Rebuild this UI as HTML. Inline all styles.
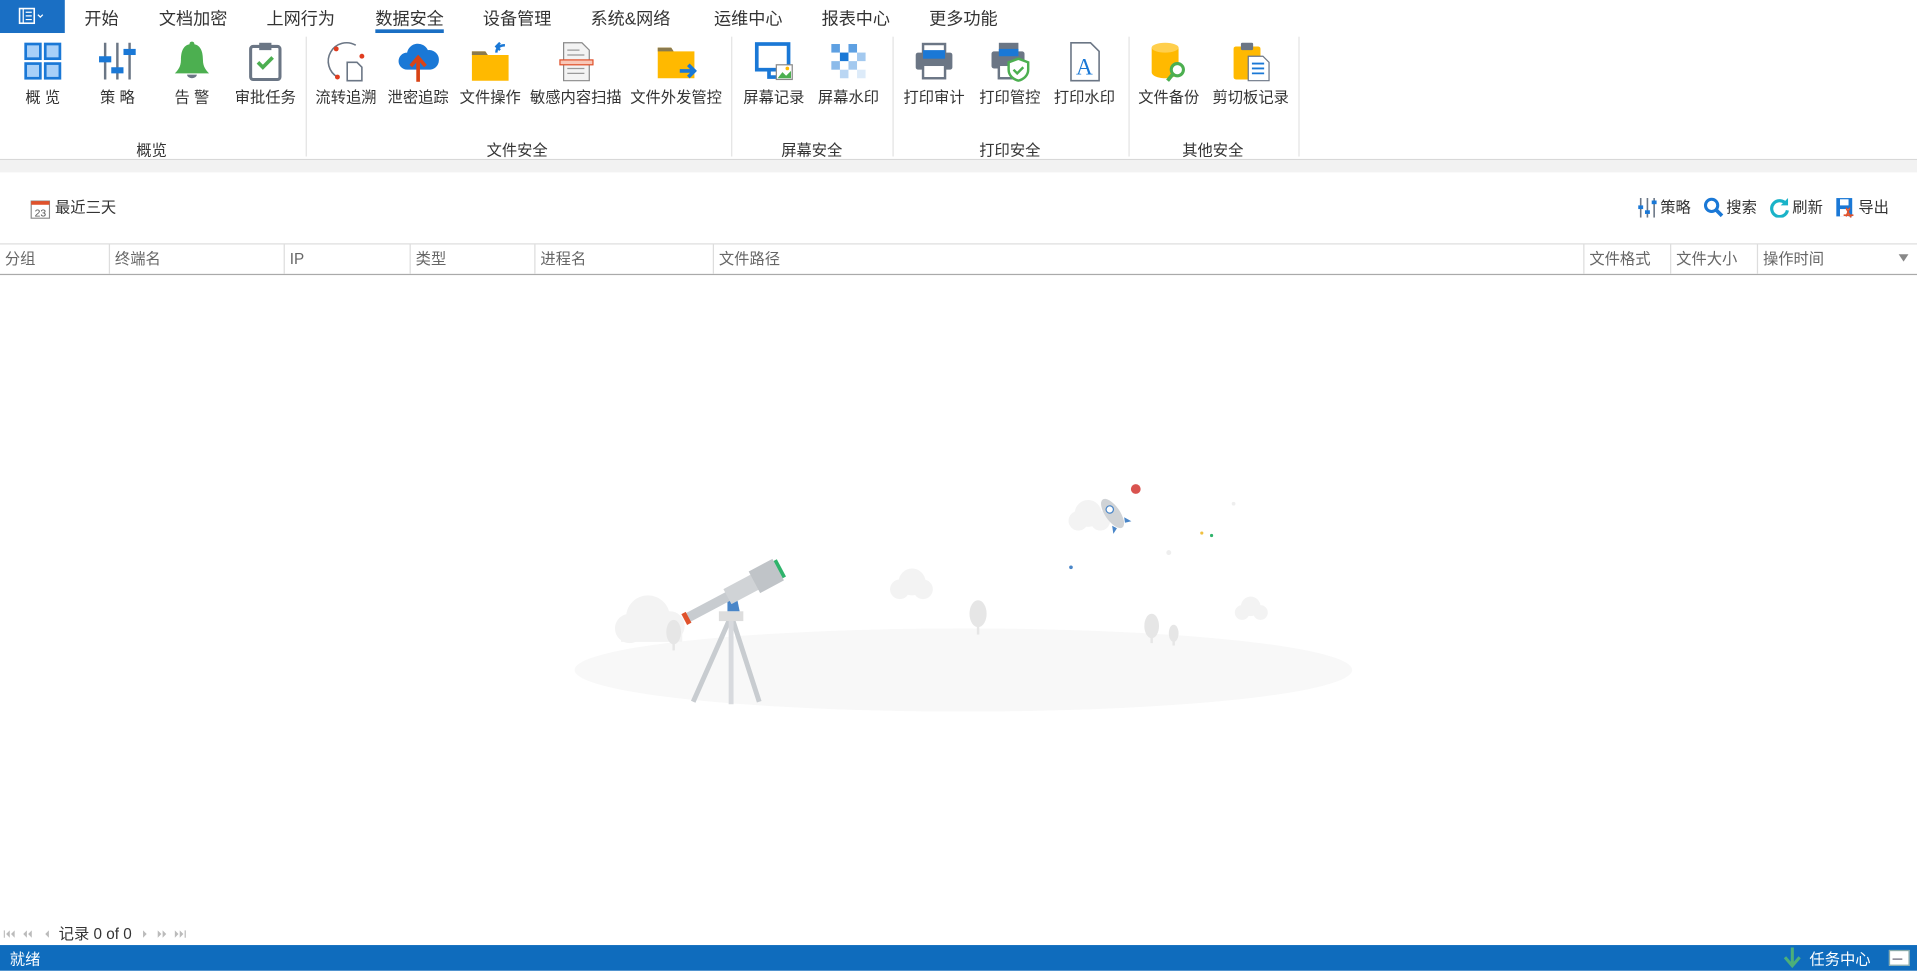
<!DOCTYPE html>
<html><head><meta charset="utf-8">
<style>
html,body{margin:0;padding:0;width:1917px;height:970px;overflow:hidden;background:#fff}
#w{position:absolute;left:0;top:0;width:1568px;height:794px;transform:scale(1.22258);transform-origin:0 0;font-family:"Liberation Sans","Noto Sans CJK SC",sans-serif;color:#333;line-height:1}
.a{position:absolute}
.tab{position:absolute;top:8px;font-size:14px;color:#333;white-space:nowrap}
.it{position:absolute;top:33px;width:80px;margin-left:-40px;text-align:center}
.it svg{display:block;margin:0 auto;width:34px;height:34px}
.it span{display:block;margin-top:7px;font-size:12.5px;white-space:nowrap;color:#333}
.gl{position:absolute;top:117px;font-size:12.5px;width:120px;margin-left:-60px;text-align:center}
.sep{position:absolute;top:30px;height:98px;width:1px;background:#e3e3e3}
.th{position:absolute;top:206px;font-size:12.5px;color:#666}
.cs{position:absolute;top:200px;height:24px;width:1px;background:#ddd}
</style></head><body><div id="w">
<div class="a" style="left:0;top:0;width:53px;height:27px;background:#1a6fc4"></div>
<svg class="a" style="left:15px;top:6px" width="24" height="14" viewBox="0 0 24 14"><rect x="1" y="1" width="12" height="12" fill="none" stroke="#fff" stroke-width="1.3"/><path d="M4 1v12M6 4h5M6 7h5M6 10h5" stroke="#fff" stroke-width="1"/><path d="M16 6l2 2 2-2" stroke="#fff" fill="none"/></svg>
<div class="tab" style="left:69px">开始</div>
<div class="tab" style="left:130px">文档加密</div>
<div class="tab" style="left:218px">上网行为</div>
<div class="tab" style="left:307px">数据安全</div>
<div class="a" style="left:307px;top:24px;width:56px;height:3px;background:#1a6fc4"></div>
<div class="tab" style="left:395px">设备管理</div>
<div class="tab" style="left:483px">系统&amp;网络</div>
<div class="tab" style="left:584px">运维中心</div>
<div class="tab" style="left:672px">报表中心</div>
<div class="tab" style="left:760px">更多功能</div>

<div class="sep" style="left:250px"></div><div class="sep" style="left:598px"></div><div class="sep" style="left:730px"></div><div class="sep" style="left:923px"></div><div class="sep" style="left:1062px"></div>

<div class="it" style="left:35px"><svg viewBox="0 0 34 34"><g fill="#a8d0f8" stroke="#1a78d6" stroke-width="2.2"><rect x="3" y="3" width="12" height="12"/><rect x="19" y="3" width="12" height="12"/><rect x="3" y="19" width="12" height="12"/><rect x="19" y="19" width="12" height="12"/></g></svg><span>概 览</span></div>
<div class="it" style="left:96px"><svg viewBox="0 0 34 34"><path d="M7 2v30M17 2v30M27 2v30" stroke="#6b7685" stroke-width="2"/><rect x="2" y="13" width="10" height="5" fill="#1a78d6"/><rect x="12" y="22" width="10" height="5" fill="#1a78d6"/><rect x="22" y="7" width="10" height="5" fill="#1a78d6"/></svg><span>策 略</span></div>
<div class="it" style="left:157px"><svg viewBox="0 0 34 34"><circle cx="17" cy="3" r="2" fill="#4caf50"/><path d="M17 3c-7 0-9 6-9 13 0 6-3 9-5 11h28c-2-2-5-5-5-11 0-7-2-13-9-13z" fill="#4caf50"/><path d="M13 28a4 3 0 0 0 8 0z" fill="#6b7685"/></svg><span>告 警</span></div>
<div class="it" style="left:217px"><svg viewBox="0 0 34 34"><rect x="5" y="5" width="24" height="27" rx="2" fill="#fff" stroke="#6b7685" stroke-width="2.5"/><rect x="12" y="2" width="10" height="6" fill="#6b7685"/><path d="M11 18l4 4 8-8" stroke="#4caf50" stroke-width="3" fill="none"/></svg><span>审批任务</span></div>
<div class="it" style="left:283px"><svg viewBox="0 0 34 34"><path d="M10 30A15 15 0 0 1 25 4" stroke="#6b7685" stroke-width="1.3" fill="none"/><circle cx="9" cy="7" r="2" fill="#e03c1f"/><circle cx="30" cy="13" r="2" fill="#e03c1f"/><circle cx="10" cy="30" r="2" fill="#e03c1f"/><path d="M18 18h8l4 4v11H18z" fill="#fff" stroke="#6b7685" stroke-width="1.3"/></svg><span>流转追溯</span></div>
<div class="it" style="left:342px"><svg viewBox="0 0 34 34"><path d="M8 24a7 7 0 0 1 0-14 9 9 0 0 1 17-2 7 7 0 0 1 2 16z" fill="#1a78d6"/><path d="M17 34V15M11 21l6-7 6 7" stroke="#d84315" stroke-width="3" fill="none"/></svg><span>泄密追踪</span></div>
<div class="it" style="left:401px"><svg viewBox="0 0 34 34"><path d="M2 9h11l2 3h17v21H2z" fill="#ffb900"/><path d="M2 9h11l2 3H2z" fill="#8a7a4e"/><path d="M22 10c0-4 3-6 7-6M25 2l-3 3 3 3" stroke="#1a78d6" stroke-width="2" fill="none"/></svg><span>文件操作</span></div>
<div class="it" style="left:471px"><svg viewBox="0 0 34 34"><path d="M7 2h15l6 6v25H7z" fill="#f3f3f3" stroke="#8a8a8a"/><path d="M10 8h10M10 12h14M10 23h14M10 27h14" stroke="#999"/><rect x="4" y="16" width="27" height="4" fill="#f8c8b8" stroke="#e0522c"/></svg><span>敏感内容扫描</span></div>
<div class="it" style="left:553px"><svg viewBox="0 0 34 34"><path d="M2 6h11l2 3h17v22H2z" fill="#ffb900"/><path d="M2 6h11l2 3H2z" fill="#8a7a4e"/><path d="M20 25h11M27 20l5 5-5 5" stroke="#1a78d6" stroke-width="3" fill="none"/></svg><span>文件外发管控</span></div>
<div class="it" style="left:633px"><svg viewBox="0 0 34 34"><rect x="3" y="3" width="26" height="21" fill="none" stroke="#1a78d6" stroke-width="3"/><path d="M13 24v6h8" stroke="#1a78d6" stroke-width="3" fill="none"/><rect x="19" y="20" width="13" height="12" fill="#fff" stroke="#888"/><path d="M20 31l4-5 3 3 4-4v6z" fill="#4caf50"/><circle cx="28" cy="23" r="1.5" fill="#ffb900"/></svg><span>屏幕记录</span></div>
<div class="it" style="left:694px"><svg viewBox="0 0 34 34"><g fill="#1a78d6"><rect x="3" y="3" width="7" height="7" opacity=".7"/><rect x="17" y="3" width="7" height="7" opacity=".7"/><rect x="10" y="10" width="7" height="7"/><rect x="24" y="10" width="7" height="7" opacity=".4"/><rect x="3" y="17" width="7" height="7" opacity=".5"/><rect x="17" y="17" width="7" height="7" opacity=".4"/><rect x="10" y="24" width="7" height="7" opacity=".3"/><rect x="24" y="24" width="7" height="7" opacity=".15"/></g></svg><span>屏幕水印</span></div>
<div class="it" style="left:764px"><svg viewBox="0 0 34 34"><rect x="8" y="3" width="18" height="8" fill="#fff" stroke="#6b7685" stroke-width="2"/><rect x="2" y="10" width="30" height="14" rx="2" fill="#6b7685"/><rect x="8" y="8" width="18" height="7" fill="#1a78d6"/><rect x="8" y="20" width="18" height="11" fill="#fff" stroke="#6b7685" stroke-width="2"/></svg><span>打印审计</span></div>
<div class="it" style="left:826px"><svg viewBox="0 0 34 34"><rect x="8" y="2" width="16" height="8" fill="#6b7685"/><rect x="2" y="9" width="27" height="14" rx="2" fill="#6b7685"/><rect x="8" y="7" width="16" height="6" fill="#1a78d6"/><rect x="8" y="20" width="12" height="11" fill="#fff" stroke="#6b7685" stroke-width="2"/><path d="M24 15l8 3v6c0 5-4 8-8 9-4-1-8-4-8-9v-6z" fill="#fff" stroke="#4caf50" stroke-width="2"/><path d="M20 24l3 3 5-5" stroke="#4caf50" stroke-width="2" fill="none"/></svg><span>打印管控</span></div>
<div class="it" style="left:887px"><svg viewBox="0 0 34 34"><path d="M6 2h16l7 7v24H6z" fill="#fff" stroke="#6b7685" stroke-width="1.3"/><text x="17" y="28" font-size="19" font-family="Liberation Serif,serif" fill="#1a78d6" text-anchor="middle">A</text></svg><span>打印水印</span></div>
<div class="it" style="left:956px"><svg viewBox="0 0 34 34"><path d="M3 6v20c0 3 5 5 11 5s11-2 11-5V6z" fill="#ffb900"/><ellipse cx="14" cy="6" rx="11" ry="4" fill="#ffcf4d"/><circle cx="24" cy="24" r="5" fill="#fff" stroke="#4caf50" stroke-width="2.5"/><path d="M20 28l-4 5" stroke="#4caf50" stroke-width="3"/></svg><span>文件备份</span></div>
<div class="it" style="left:1023px"><svg viewBox="0 0 34 34"><rect x="3" y="5" width="22" height="27" rx="2" fill="#ffb900"/><rect x="9" y="2" width="10" height="6" rx="1" fill="#6b7685"/><path d="M15 13h12l5 5v15H15z" fill="#fff" stroke="#6b7685"/><path d="M18 19h10M18 23h10M18 27h10" stroke="#1a78d6" stroke-width="1.5"/></svg><span>剪切板记录</span></div>

<div class="gl" style="left:124px">概览</div>
<div class="gl" style="left:423px">文件安全</div>
<div class="gl" style="left:664px">屏幕安全</div>
<div class="gl" style="left:826px">打印安全</div>
<div class="gl" style="left:992px">其他安全</div>

<div class="a" style="left:0;top:130px;width:1568px;height:1px;background:#d8d8d8"></div>
<div class="a" style="left:0;top:131px;width:1568px;height:10px;background:#f2f2f2"></div>

<svg class="a" style="left:25px;top:162px" width="16" height="17" viewBox="0 0 16 17"><rect x="0.5" y="2.5" width="15" height="14" fill="#fff" stroke="#888"/><rect x="0.5" y="2.5" width="15" height="3" fill="#e0522c"/><text x="8" y="15" font-size="8.5" text-anchor="middle" fill="#555" font-family="Liberation Sans">23</text></svg>
<div class="a" style="left:45px;top:164px;font-size:12.5px">最近三天</div>

<svg class="a" style="left:1339px;top:161px" width="17" height="17" viewBox="0 0 17 17"><path d="M3 1v16M8.5 1v16M14 1v16" stroke="#6b7685" stroke-width="1.3"/><rect x="1" y="7" width="4" height="3" fill="#1a78d6"/><rect x="6.5" y="11" width="4" height="3" fill="#1a78d6"/><rect x="12" y="3" width="4" height="3" fill="#1a78d6"/></svg>
<div class="a" style="left:1358px;top:164px;font-size:12.5px">策略</div>
<svg class="a" style="left:1393px;top:161px" width="17" height="17" viewBox="0 0 17 17"><circle cx="7" cy="7" r="5" fill="none" stroke="#1a78d6" stroke-width="2.5"/><path d="M10.5 10.5l5 5" stroke="#1a78d6" stroke-width="3"/></svg>
<div class="a" style="left:1412px;top:164px;font-size:12.5px">搜索</div>
<svg class="a" style="left:1447px;top:161px" width="17" height="17" viewBox="0 0 17 17"><path d="M14 6A6.5 6.5 0 1 0 15 11" fill="none" stroke="#1ab3c8" stroke-width="2.6"/><path d="M15.5 1v6h-6z" fill="#1ab3c8"/></svg>
<div class="a" style="left:1466px;top:164px;font-size:12.5px">刷新</div>
<svg class="a" style="left:1501px;top:161px" width="17" height="17" viewBox="0 0 17 17"><rect x="1" y="1" width="13" height="15" fill="#1a78d6"/><rect x="4" y="2" width="7" height="5" fill="#fff"/><rect x="4" y="10" width="7" height="6" fill="#fff"/><path d="M9 9l4 8M12 9l-3 7M7 15h8" stroke="#e0522c" stroke-width="1.3" fill="none"/></svg>
<div class="a" style="left:1520px;top:164px;font-size:12.5px">导出</div>

<div class="a" style="left:0;top:199px;width:1568px;height:1px;background:#ddd"></div>
<div class="a" style="left:0;top:224px;width:1568px;height:1px;background:#aaa"></div>
<div class="cs" style="left:89px"></div><div class="cs" style="left:232px"></div><div class="cs" style="left:335px"></div><div class="cs" style="left:437px"></div><div class="cs" style="left:583px"></div><div class="cs" style="left:1295px"></div><div class="cs" style="left:1366px"></div><div class="cs" style="left:1437px"></div>
<div class="th" style="left:4px">分组</div><div class="th" style="left:94px">终端名</div><div class="th" style="left:237px">IP</div><div class="th" style="left:340px">类型</div><div class="th" style="left:442px">进程名</div><div class="th" style="left:588px">文件路径</div><div class="th" style="left:1300px">文件格式</div><div class="th" style="left:1371px">文件大小</div><div class="th" style="left:1442px">操作时间</div>
<div class="a" style="left:1553px;top:208px;width:0;height:0;border-left:4px solid transparent;border-right:4px solid transparent;border-top:6px solid #888"></div>

<svg class="a" style="left:470px;top:390px" width="640" height="195" viewBox="0 0 640 195">
<ellipse cx="318" cy="158" rx="318" ry="34" fill="#f8f8f8"/>
<g fill="#f3f3f3"><circle cx="60" cy="115" r="18"/><circle cx="45" cy="124" r="12"/><circle cx="78" cy="122" r="12"/><rect x="38" y="115" width="50" height="20"/>
<circle cx="420" cy="30" r="11"/><circle cx="412" cy="36" r="8"/><circle cx="430" cy="36" r="8"/>
<circle cx="276" cy="86" r="11"/><circle cx="266" cy="92" r="8"/><circle cx="285" cy="92" r="8"/>
<circle cx="553" cy="106" r="8"/><circle cx="546" cy="111" r="6"/><circle cx="561" cy="111" r="6"/></g>
<g fill="#e6e6e6"><ellipse cx="330" cy="112" rx="7" ry="11"/><rect x="329" y="115" width="2" height="14"/><ellipse cx="472" cy="122" rx="6" ry="10"/><rect x="471" y="124" width="2" height="12"/><ellipse cx="490" cy="128" rx="4" ry="7"/><rect x="489" y="130" width="2" height="8"/><ellipse cx="81" cy="127" rx="6" ry="10"/><rect x="80" y="130" width="2" height="12"/></g>
<g stroke="#c8ccd0" stroke-width="4"><path d="M127 116l-30 68M129 116l22 68"/><path d="M128 116v70" stroke="#d8dade"/></g>
<rect x="118" y="110" width="20" height="8" fill="#ddd"/>
<path d="M125 100l8 0 2 10h-10z" fill="#4a86c8"/>
<g transform="rotate(-28 125 98)"><rect x="88" y="94" width="40" height="8" fill="#c8ccd0"/><rect x="125" y="91" width="30" height="14" fill="#d0d3d6"/><rect x="150" y="88" width="22" height="20" fill="#c0c4c8"/><rect x="85" y="93" width="4" height="10" fill="#e0522c"/><rect x="172" y="90" width="3" height="16" fill="#2fb36b"/></g>
<circle cx="459" cy="10" r="4" fill="#d9534f"/>
<g transform="rotate(-35 440 30)"><ellipse cx="440" cy="30" rx="6" ry="14" fill="#d0d3d6"/><circle cx="440" cy="26" r="3" fill="#fff" stroke="#4a86c8"/><path d="M434 38l-3 6 5-2zM446 38l3 6-5-2z" fill="#4a86c8"/></g>
<circle cx="406" cy="74" r="1.5" fill="#4a86c8"/><circle cx="513" cy="46" r="1.3" fill="#f0c040"/><circle cx="521" cy="48" r="1.3" fill="#2fb36b"/><circle cx="486" cy="62" r="2" fill="#eee"/><circle cx="539" cy="22" r="1.5" fill="#eee"/>
</svg>

<svg class="a" style="left:3px;top:760px" width="40" height="8" viewBox="0 0 40 8"><g fill="#bbb"><rect x="0" y="1" width="1" height="6"/><path d="M5 1v6l-3-3zM9 1v6l-3-3zM19 1v6l-3-3zM23 1v6l-3-3zM37 1v6l-3-3z"/></g></svg>
<div class="a" style="left:48px;top:758px;font-size:12.5px">记录 0 of 0</div>
<svg class="a" style="left:116px;top:760px" width="40" height="8" viewBox="0 0 40 8"><g fill="#bbb"><path d="M1 1v6l3-3zM13 1v6l3-3zM17 1v6l3-3zM27 1v6l3-3zM31 1v6l3-3z"/><rect x="35" y="1" width="1" height="6"/></g></svg>

<div class="a" style="left:0;top:773px;width:1568px;height:21px;background:#0f6cbd"></div>
<div class="a" style="left:8px;top:779px;font-size:12.5px;color:#fff">就绪</div>
<svg class="a" style="left:1459px;top:775px" width="14" height="18" viewBox="0 0 14 18"><path d="M7 0v14M1 8l6 7 6-7" stroke="#4caf7a" stroke-width="2.5" fill="none"/></svg>
<div class="a" style="left:1480px;top:779px;font-size:12.5px;color:#fff">任务中心</div>
<div class="a" style="left:1545px;top:777px;width:15px;height:11px;background:#fff;border:1px solid #8aa"></div>
<div class="a" style="left:1548px;top:784px;width:8px;height:1px;background:#667"></div>
</div></body></html>
